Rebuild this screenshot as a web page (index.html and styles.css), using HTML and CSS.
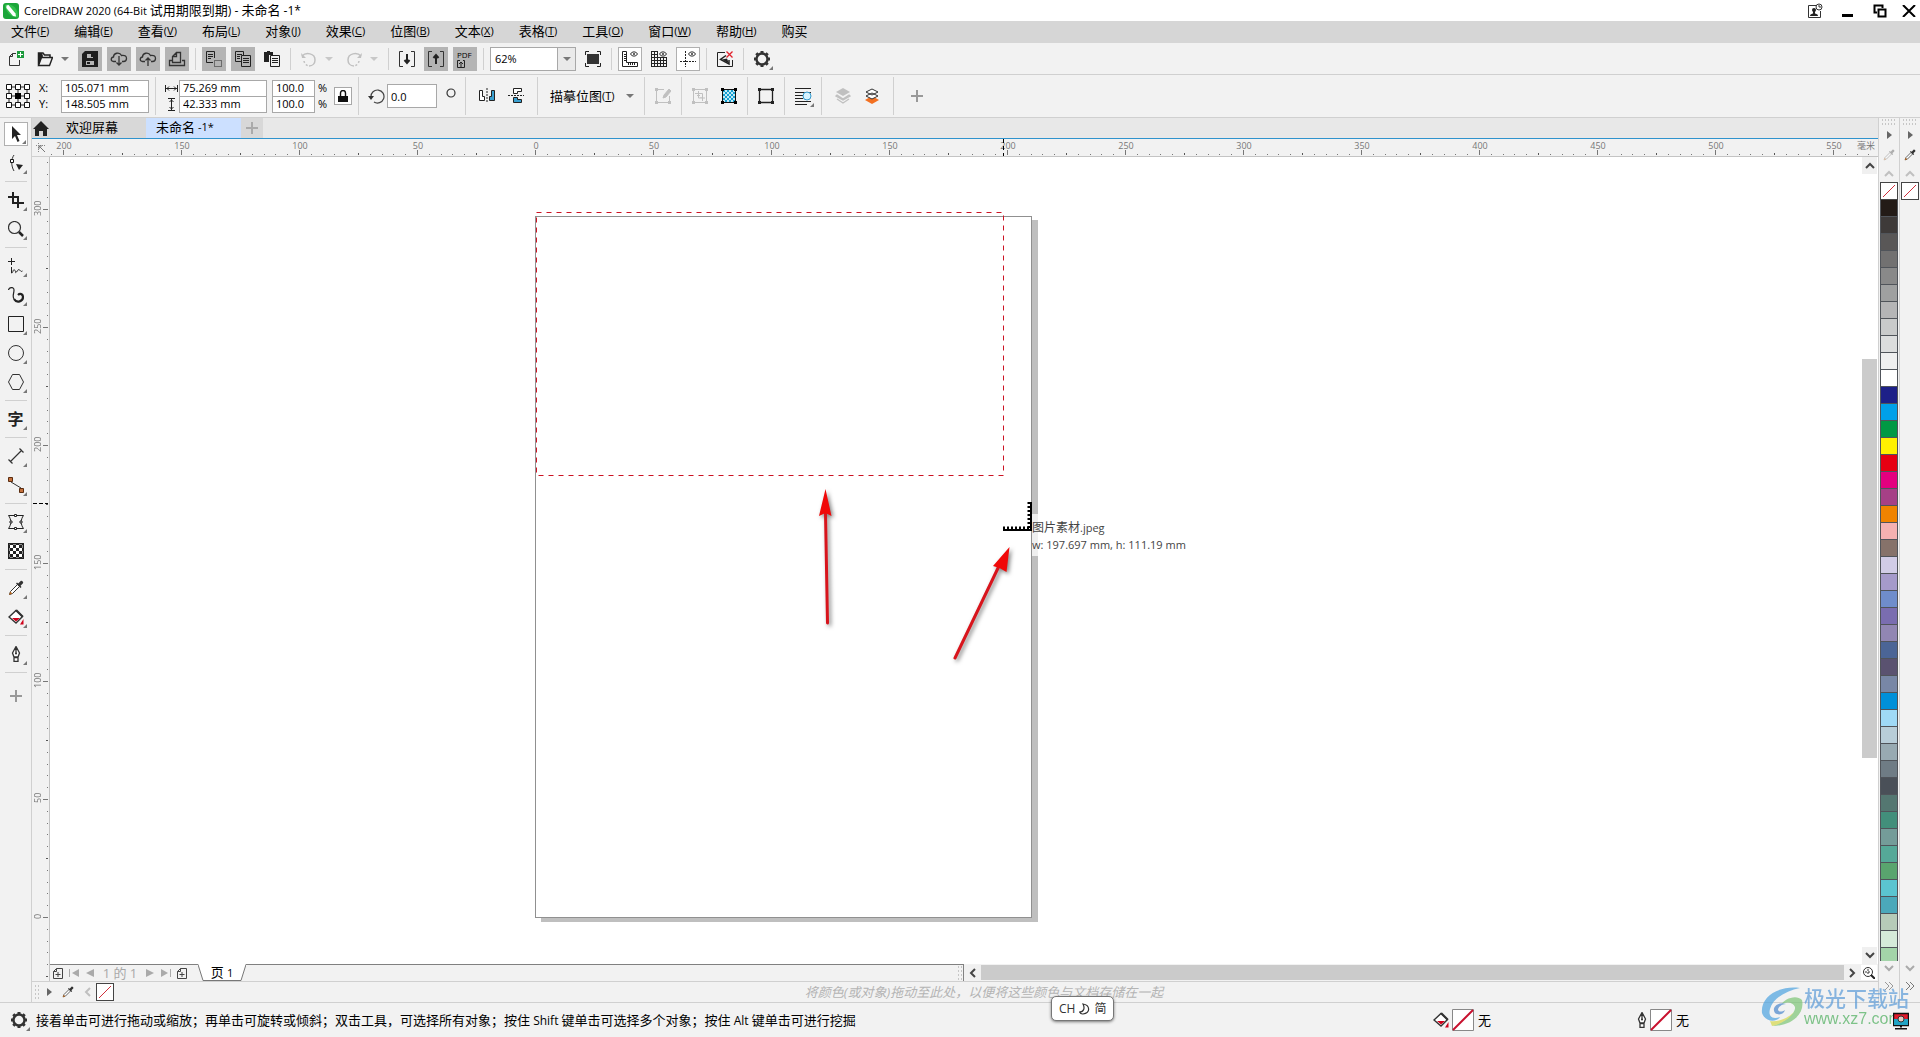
FILE: index.html
```html
<!DOCTYPE html>
<html lang="zh-CN">
<head>
<meta charset="utf-8">
<title>CorelDRAW 2020</title>
<link rel="stylesheet" href="styles.css">
</head>
<body>
<svg class="defs" width="0" height="0" aria-hidden="true">
  <symbol id="dropper" viewBox="0 0 16 16"><path d="M1.5 14.500l1-3 7-7 2 2-7 7z" fill="#fff" stroke="#333"/><path d="M1 15l1.300-3.500 2 2z" fill="#b5651d"/><path d="M8 3.500l4.500 4.500 1-1-1-1.200 2.500-2.500c1-1-1.300-3.300-2.300-2.300L10.200 3.500 9 2.500z" fill="#333"/></symbol>
  <symbol id="gear" viewBox="0 0 18 18"><circle cx="9" cy="9" r="5.500" fill="none" stroke="#333" stroke-width="2.400"/><path d="M9 1v2M9 15v2M1 9h2M15 9h2M3.300 3.300l1.500 1.500M13.200 13.200l1.500 1.500M3.300 14.700l1.500-1.500M13.200 4.800l1.500-1.500" stroke="#333" stroke-width="3"/></symbol>
  <symbol id="tri" viewBox="0 0 8 4"><path d="M0 0h8L4 4z" fill="currentColor"/></symbol>
  <symbol id="up" viewBox="0 0 10 7"><path d="M1 6l4-4 4 4" fill="none" stroke="currentColor" stroke-width="2"/></symbol>
  <symbol id="down" viewBox="0 0 10 7"><path d="M1 1l4 4 4-4" fill="none" stroke="currentColor" stroke-width="2"/></symbol>
  <symbol id="left" viewBox="0 0 7 10"><path d="M6 1L2 5l4 4" fill="none" stroke="currentColor" stroke-width="2"/></symbol>
  <symbol id="right" viewBox="0 0 7 10"><path d="M1 1l4 4-4 4" fill="none" stroke="currentColor" stroke-width="2"/></symbol>
  <symbol id="play" viewBox="0 0 5 8"><path d="M0 0l5 4-5 4z" fill="#666"/></symbol>
  <symbol id="addpage" viewBox="0 0 10 11"><path d="M3.500.5h6v10h-9v-7zM3.500.5v3h-3M5 4v5M2.500 6.500h5" fill="none" stroke="#444"/></symbol>
  <symbol id="pen" viewBox="0 0 10 16"><path d="M5 .5L1.500 7l1.500 4h4l1.500-4zM5 1v7M3 11.500h4v4H3z" fill="#fff" stroke="#333" stroke-width="1.300"/><circle cx="5" cy="7.500" r="1" fill="#333"/></symbol>
  <symbol id="bucket" viewBox="0 0 16 16"><path d="M1 8l7-6.500 6.500 6L8 14z" fill="#fff" stroke="#333" stroke-width="1.400"/><path d="M7 1.500l2-1 6.500 6.500-1.500 1.500z" fill="#333"/><path d="M4 9h8l-4 3.500zM15.500 10v5.500H12z" fill="#d0021b"/></symbol>
  <symbol id="eye" viewBox="0 0 8 6"><path d="M.5 3C2 .2 6 .2 7.500 3 6 5.800 2 5.800.5 3z" fill="none" stroke="#333"/><circle cx="4" cy="3" r="1" fill="#333"/></symbol>
</svg>

<header class="titlebar">
  <svg class="logo" width="16" height="16"><rect width="16" height="16" rx="3" fill="#1ca53a"/><path d="M2 2c6-3 14 4 13 12-5 2-13-5-13-12z" fill="#32c04c"/><path d="M3.500 2.500l2-.5 7 8.500.5 3-3-.5L3.300 5z" fill="#fff"/></svg>
  <h1 class="title"><span class="lat">CorelDRAW 2020 (64-Bit </span>试用期限到期<span class="lat wide-lat">) - </span>未命名<span class="lat wide-lat"> -1*</span></h1>
  <div class="window-buttons">
    <button aria-label="帐户"><svg width="16" height="16"><path d="M9 2.500H1.500v12h12V8" fill="none" stroke="#333"/><circle cx="7" cy="7" r="2" fill="#222"/><path d="M3 13c0-2 2-2 3-2.500V8h2v2.500c1 .5 3 .5 3 2.500z" fill="#222"/><circle cx="12" cy="4" r="3" fill="#fff" stroke="#333"/><path d="M12 2v2h2" fill="none" stroke="#333"/></svg></button>
    <button aria-label="最小化"><svg width="12" height="12"><path d="M0 9h11v3H0z"/></svg></button>
    <button aria-label="还原"><svg width="14" height="14"><path d="M4 8.500H1.500v-7h8V4M5.500 5.500h7v7h-7z" fill="none" stroke="#000" stroke-width="2"/></svg></button>
    <button aria-label="关闭"><svg width="14" height="12"><path d="M1 0l12 12M13 0L1 12" stroke="#000" stroke-width="2"/></svg></button>
  </div>
</header>

<nav class="menubar">
  <button>文件<span class="lat">(<u>F</u>)</span></button><button>编辑<span class="lat">(<u>E</u>)</span></button><button>查看<span class="lat">(<u>V</u>)</span></button><button>布局<span class="lat">(<u>L</u>)</span></button><button>对象<span class="lat">(<u>J</u>)</span></button><button>效果<span class="lat">(<u>C</u>)</span></button><button>位图<span class="lat">(<u>B</u>)</span></button><button>文本<span class="lat">(<u>X</u>)</span></button><button>表格<span class="lat">(<u>T</u>)</span></button><button>工具<span class="lat">(<u>O</u>)</span></button><button>窗口<span class="lat">(<u>W</u>)</span></button><button>帮助<span class="lat">(<u>H</u>)</span></button><button>购买</button>
</nav>

<div class="toolbar">
  <button class="tool" aria-label="新建"><svg width="18" height="18"><path d="M9 3.500H5.500l-3 3v9h10V10M5.500 3.500v3h-3" fill="none" stroke="#333"/><path d="M10 1h7v7h-7z" fill="#1c9a3c"/><path d="M13.500 2v5M11 4.500h5" stroke="#fff"/></svg></button>
  <div class="split">
    <button class="tool" aria-label="打开"><svg width="16" height="16"><path d="M1.500 14V2H6l1.500 2H13v2" fill="none" stroke="#222" stroke-width="1.500"/><path d="M1 15V2h4l1 3-3 10z" fill="#222"/><path d="M4.500 6.500h11l-3 8h-11z" fill="#f2f2f2" stroke="#222" stroke-width="1.400"/></svg></button>
    <button class="drop" aria-label="最近打开"><svg width="8" height="4"><use href="#tri"/></svg></button>
  </div>
  <button class="tool dim" aria-label="保存"><svg width="16" height="16"><path d="M3 0h13v16H0V3z" fill="#1c1c1c"/><path d="M5 3h6v4H5zM4 10h8v4H4z" fill="#b4b4b4"/><path d="M9 3h2v3H9zM5 11h3v2H5z" fill="#1c1c1c"/></svg></button>
  <button class="tool dim" aria-label="从云打开"><svg width="18" height="16"><path d="M6 10.500H3.500c-3 0-3-4 0-4.500 0-4 6-5.500 8-1.500 4-.5 5 1 5 3s-1 3-3 3H12M9 5v9M6.500 11.500L9 14l2.500-2.500" fill="none" stroke="#333" stroke-width="1.300"/></svg></button>
  <button class="tool dim" aria-label="保存到云"><svg width="18" height="16"><path d="M6 10.500H3.500c-3 0-3-4 0-4.500 0-4 6-5.500 8-1.500 4-.5 5 1 5 3s-1 3-3 3H12M9 15V7M6.500 9.500L9 7l2.500 2.500" fill="none" stroke="#333" stroke-width="1.300"/></svg></button>
  <button class="tool dim" aria-label="打印"><svg width="18" height="16"><path d="M4 9.500H1.500v5h15v-5H14M4.500 11.500v-6l4-4h4v10zM8.500 1.500v4h-4" fill="none" stroke="#333" stroke-width="1.300"/></svg></button>
  <span class="sep"></span>
  <button class="tool dim" aria-label="剪切"><svg width="16" height="16"><path d="M7 11.500H.5V.5h8V7M2 3.500h5M2 5.500h5M2 7.500h3" fill="none" stroke="#222"/><path d="M8.500 9.500h7v6h-7z" fill="none" stroke="#222" stroke-dasharray="1 1"/></svg></button>
  <button class="tool dim" aria-label="复制"><svg width="16" height="16"><path d="M6 10.500H.5V.5h8V4M2 3.500h5M2 5.500h3M2 7.500h3M6.500 4.500h9v11h-9zM8 7.500h6M8 9.500h6M8 11.500h6" fill="none" stroke="#222"/></svg></button>
  <button class="tool" aria-label="粘贴"><svg width="16" height="16"><path d="M0 1h3V0h3v1h3v3H5v7H0z" fill="#222"/><path d="M6.500 4.500h9v11h-9zM8 7.500h6M8 9.500h6M8 11.500h6" fill="none" stroke="#222"/></svg></button>
  <span class="sep"></span>
  <div class="split off">
    <button class="tool" aria-label="撤消"><svg width="16" height="16"><path d="M1 5c4-4 13-3 13 4 0 3-2 6-6 6" fill="none" stroke="currentColor" stroke-width="1.500"/><path d="M3 10a6 6 0 0 0 5 5" fill="none" stroke="currentColor" stroke-width="1.500" stroke-dasharray="2 2"/><path d="M0 2l1 5h4z" fill="currentColor"/></svg></button>
    <button class="drop" aria-label="撤消列表"><svg width="8" height="4"><use href="#tri"/></svg></button>
  </div>
  <div class="split off">
    <button class="tool" aria-label="重做"><svg width="16" height="16"><path d="M15 5C11 1 2 2 2 9c0 3 2 6 6 6" fill="none" stroke="currentColor" stroke-width="1.500"/><path d="M13 10a6 6 0 0 1-5 5" fill="none" stroke="currentColor" stroke-width="1.500" stroke-dasharray="2 2"/><path d="M16 2l-1 5h-4z" fill="currentColor"/></svg></button>
    <button class="drop" aria-label="重做列表"><svg width="8" height="4"><use href="#tri"/></svg></button>
  </div>
  <span class="sep"></span>
  <button class="tool" aria-label="导入"><svg width="16" height="16"><path d="M4 .5H.5v15H4M12 .5h3.500v15H12" fill="none" stroke="#333"/><path d="M8 3v9M5.500 9L8 12l2.500-3" fill="none" stroke="#222" stroke-width="2"/></svg></button>
  <button class="tool dim" aria-label="导出"><svg width="16" height="16"><path d="M4 .5H.5v15H4M12 .5h3.500v15H12" fill="none" stroke="#333"/><path d="M8 13V4M5.500 7L8 4l2.500 3" fill="none" stroke="#222" stroke-width="2"/></svg></button>
  <button class="tool dim pdf" aria-label="发布为 PDF"><span>PDF</span><svg width="9" height="9"><path d="M3 1.500H.5v7h7v-7H6M4 8V3M2 5l2-2 2 2" fill="none" stroke="#222"/></svg></button>
  <span class="sep"></span>
  <div class="combo"><input type="text" aria-label="缩放级别" value="62%"><button aria-label="选择缩放"><svg width="8" height="4"><use href="#tri"/></svg></button></div>
  <button class="tool" aria-label="全屏预览"><svg width="16" height="16"><path d="M2 3h12v10H2z" fill="#333"/><path d="M.5 4V.5H4M12 .5h3.500V4M15.500 12v3.500H12M4 15.500H.5V12" fill="none" stroke="#222"/></svg></button>
  <span class="sep"></span>
  <button class="tool on" aria-label="显示标尺"><svg width="16" height="16"><path d="M.5.5h4v11h11v4H.5zM2 3.500h2M2 5.500h2M2 7.500h2M2 9.500h2M6.500 12v2M8.500 12v2M10.500 12v2M12.500 12v2" fill="none" stroke="#222"/><use href="#eye" x="8" width="8" height="6"/></svg></button>
  <button class="tool" aria-label="显示网格"><svg width="16" height="16"><path d="M.5 0v16M3.500 0v16M6.500 0v16M9.500 6v10M12.500 6v10M15.500 6v10M0 .5h7M0 3.500h7M0 6.500h16M0 9.500h16M0 12.500h16M0 15.500h16" stroke="#222"/><use href="#eye" x="8" width="8" height="6"/></svg></button>
  <button class="tool on" aria-label="显示辅助线"><svg width="16" height="16"><path d="M5.500 0v16M0 10.500h16" stroke="#222" stroke-dasharray="2 1"/><use href="#eye" x="8" width="8" height="6"/></svg></button>
  <span class="sep"></span>
  <button class="tool" aria-label="关闭贴齐"><svg width="16" height="16"><path d="M8 1.500H.5v14h15V9" fill="none" stroke="#222"/><path d="M9 4.500L3.500 8.500 12 13V9" fill="none" stroke="#222" stroke-width="1.500"/><path d="M5 8.500l5-1 2 5z" fill="#222"/><path d="M9.500.5l6 6M15.500.5l-6 6" stroke="#e0202a" stroke-width="1.300"/></svg></button>
  <span class="sep"></span>
  <button class="tool fly" aria-label="选项"><svg width="18" height="18"><use href="#gear"/></svg></button>
</div>

<div class="propbar">
  <div class="group coords">
    <svg class="anchor" width="24" height="24"><path d="M3 3h18v18H3zM12 3v18M3 12h18" fill="none" stroke="#222"/><path d="M.5.5h5v5h-5zM9.500.5h5v5h-5zM18.500.5h5v5h-5zM.5 9.500h5v5h-5zM18.500 9.500h5v5h-5zM.5 18.500h5v5h-5zM9.500 18.500h5v5h-5zM18.500 18.500h5v5h-5z" fill="#fff" stroke="#111"/><path d="M9 9h6v6H9z"/></svg>
    <div class="labels"><label for="px">X:</label><label for="py">Y:</label></div>
    <div class="stack"><input id="px" type="text" value="105.071 mm"><input id="py" type="text" value="148.505 mm"></div>
  </div>
  <div class="group size">
    <div class="labels icons">
      <label for="pw" aria-label="宽度"><svg width="13" height="7"><path d="M.5 0v7M12.500 0v7M1 3.500h11M4 1.500l-2 2 2 2M9 1.500l2 2-2 2" fill="none" stroke="#222"/></svg></label>
      <label for="ph" aria-label="高度"><svg width="7" height="13"><path d="M0 .5h7M0 12.500h7M3.500 1v11M1.500 4l2-2 2 2M1.500 9l2 2 2-2" fill="none" stroke="#222"/></svg></label>
    </div>
    <div class="stack"><input id="pw" type="text" value="75.269 mm"><input id="ph" type="text" value="42.333 mm"></div>
    <div class="stack pct"><input id="sx" type="text" value="100.0"><input id="sy" type="text" value="100.0"></div>
    <div class="labels unit"><label for="sx">%</label><label for="sy">%</label></div>
    <button class="lock" aria-label="锁定比率"><svg width="10" height="12"><path d="M2.500 6V3a2 2 0 0 1 5 0v3" fill="none" stroke="#111" stroke-width="1.400"/><path d="M0 6h10v6H0z" fill="#111"/></svg></button>
  </div>
  <div class="group rotate">
    <svg width="17" height="16"><path d="M3 9a6.500 6.500 0 1 1 3 5" fill="none" stroke="#444" stroke-width="1.200"/><path d="M0 8h6l-3 4z" fill="#333"/></svg>
    <input class="angle" type="text" aria-label="旋转角度" value="0.0">
    <svg class="degree" width="10" height="10"><circle cx="5" cy="5" r="4" fill="none" stroke="#333" stroke-width="1.200"/></svg>
  </div>
  <div class="group wide">
    <button class="tool" aria-label="水平镜像"><svg width="16" height="16"><path d="M.5 2.500h3v6h2v4h-5z" fill="#fff" stroke="#222"/><path d="M15.500 2.500h-3v6h-2v4h5z" fill="#3aa0d0" stroke="#222"/><path d="M8 0v15" stroke="#222" stroke-dasharray="2 1"/></svg></button>
    <button class="tool" aria-label="垂直镜像"><svg width="16" height="16"><path d="M5.500 5.500v-5h8v3h-4v2z" fill="#fff" stroke="#222"/><path d="M5.500 9.500v5h8v-3h-4v-2z" fill="#3aa0d0" stroke="#222"/><path d="M0 7.500h16" stroke="#222" stroke-dasharray="2 1"/></svg></button>
  </div>
  <div class="group trace"><button class="textbtn">描摹位图<span class="lat">(<u>T</u>)</span><svg width="8" height="4"><use href="#tri"/></svg></button></div>
  <div class="group off"><button class="tool" aria-label="编辑位图"><svg width="16" height="16"><path d="M9 1.500H1.500v13h13V8M8 10l1-3 5-6 2 2-5 6z" fill="none" stroke="currentColor"/><path d="M0 0h3v3H0zM0 13h3v3H0zM13 13h3v3h-3zM9 7l5-6 2 2-5 6-3 1z" fill="currentColor"/></svg></button></div>
  <div class="group"><button class="tool off" aria-label="裁剪位图"><svg width="16" height="16"><path d="M1.500 1.500h13v13h-13zM6.500 3v7H13M3 5.500h7.500V13M5 7.500h3M9 9v1" fill="none" stroke="currentColor"/><path d="M0 0h3v3H0zM13 0h3v3h-3zM0 13h3v3H0zM13 13h3v3h-3z" fill="currentColor"/></svg></button>
    <button class="tool" aria-label="重新取样"><svg width="16" height="16"><defs><pattern id="chk" width="4" height="4" patternUnits="userSpaceOnUse"><rect width="4" height="4" fill="#bfeaf8"/><path d="M0 0h2v2H0zM2 2h2v2H2z" fill="#159fd0"/></pattern></defs><path d="M1.500 1.500h13v13h-13z" fill="url(#chk)" stroke="#111"/><path d="M0 0h3v3H0zM13 0h3v3h-3zM0 13h3v3H0zM13 13h3v3h-3z"/></svg></button></div>
  <div class="group"><button class="tool" aria-label="位图边框"><svg width="16" height="16"><path d="M1.500 1.500h13v13h-13z" fill="none" stroke="#222" stroke-width="1.300"/><path d="M0 0h3v3H0zM13 0h3v3h-3zM0 13h3v3H0zM13 13h3v3h-3z" fill="#222"/></svg></button></div>
  <div class="group"><button class="tool fly" aria-label="文本换行"><svg width="18" height="18"><path d="M1 1.500h16M1 5.500h16M1 8.500h8M1 11.500h8M1 14.500h16M1 17.500h12" stroke="#222"/><circle cx="13" cy="9" r="4" fill="#d6f3ff" stroke="#3399cc"/></svg></button></div>
  <div class="group wide"><button class="tool off" aria-label="到图层前面"><svg width="16" height="16"><path d="M8 0l7 4-7 4-7-4z" fill="currentColor"/><path d="M2 7l6 4 6-4 1 1-7 4-7-4zM2 11l6 4 6-4" fill="none" stroke="currentColor" stroke-width="1.300"/></svg></button>
    <button class="tool" aria-label="到图层后面"><svg width="16" height="16"><path d="M1 12l7-4 7 4-7 4z" fill="#f37021"/><path d="M2 8l6-3 6 3-6 3zM2 4l6-3 6 3-6 3z" fill="#fff" stroke="#333"/></svg></button></div>
  <button class="tool plus" aria-label="自定义"><svg width="12" height="12"><path d="M6 0v12M0 6h12" stroke="#999" stroke-width="2"/></svg></button>
</div>

<main class="workspace">
  <aside class="toolbox">
    <button class="tool on fly" aria-label="选择"><svg width="16" height="16"><path d="M4 0v13l3-3 2.500 6 2-1L9 9h4z" fill="#222"/></svg></button>
    <button class="tool fly" aria-label="形状"><svg width="16" height="16"><path d="M6 0C3 4 3 11 6 16" fill="none" stroke="#333"/><path d="M2.500 4.500h3v3h-3z" fill="#fff" stroke="#111"/><path d="M8 9l7 1-4 5z" fill="#222"/></svg></button>
    <span class="sep"></span>
    <button class="tool fly" aria-label="裁剪"><svg width="16" height="16"><path d="M0 5h10v11M16 11H5V0" fill="none" stroke="#222" stroke-width="2"/></svg></button>
    <button class="tool fly" aria-label="缩放"><svg width="16" height="16"><circle cx="6.500" cy="6.500" r="6" fill="none" stroke="#333" stroke-width="1.200"/><path d="M11 11l4 4" stroke="#222" stroke-width="2.500"/></svg></button>
    <span class="sep"></span>
    <button class="tool fly" aria-label="手绘"><svg width="16" height="16"><path d="M3.500 0v7M0 3.500h7M3.500 9v6c2 0 1-4 3-3s0 4 2 2 1-3 3-2 1 2 3 1" fill="none" stroke="#222"/></svg></button>
    <button class="tool fly" aria-label="艺术笔"><svg width="16" height="16"><path d="M.5 3C1 0 6-.5 6 3c0 4-2 6 0 9" fill="none" stroke="#222" stroke-width="1.200"/><path d="M6 12c3 5 9 2 9-2 0-3-3-4-5-2" fill="none" stroke="#222" stroke-width="2.200"/></svg></button>
    <button class="tool fly" aria-label="矩形"><svg width="16" height="16"><path d="M.5.5h15v15H.5z" fill="none" stroke="#222"/></svg></button>
    <button class="tool fly" aria-label="椭圆形"><svg width="16" height="16"><circle cx="8" cy="8" r="7.500" fill="none" stroke="#333"/></svg></button>
    <button class="tool fly" aria-label="多边形"><svg width="16" height="16"><path d="M4.500.5h7L15.500 8l-4 7.500h-7L.5 8z" fill="none" stroke="#333"/></svg></button>
    <span class="sep"></span>
    <button class="tool fly glyph">字</button>
    <span class="sep"></span>
    <button class="tool fly" aria-label="平行度量"><svg width="16" height="16"><path d="M2 14L14 2M.5 11.500l4 4M11.500.5l4 4" stroke="#333" stroke-width="1.200"/></svg></button>
    <button class="tool fly" aria-label="连接器"><svg width="16" height="16"><path d="M3 5l10 6" stroke="#333"/><path d="M.5.5h4v4h-4zM11.500 11.500h4v4h-4z" fill="#c4703c" stroke="#5a2d10"/></svg></button>
    <span class="sep"></span>
    <button class="tool fly" aria-label="变形"><svg width="16" height="16"><path d="M.5 1.500h15c-3 4-3 9 0 13H.5c3-4 3-9 0-13z" fill="none" stroke="#222"/><path d="M6.500.5h2v2h-2zM6.500 13.500h2v2h-2zM2 7h2v2H2zM12 7h2v2h-2z" fill="#fff" stroke="#222"/></svg></button>
    <button class="tool" aria-label="透明度"><svg width="16" height="16"><defs><pattern id="chess" x="2" y="2" width="6" height="6" patternUnits="userSpaceOnUse"><rect width="6" height="6" fill="#222"/><path d="M0 0h3v3H0zM3 3h3v3H3z" fill="#fff"/></pattern></defs><path d="M.5.5h15v15H.5z" fill="url(#chess)" stroke="#222" stroke-width="2"/></svg></button>
    <span class="sep"></span>
    <button class="tool fly" aria-label="颜色滴管"><svg width="16" height="16"><use href="#dropper"/></svg></button>
    <button class="tool fly" aria-label="交互式填充"><svg width="16" height="16"><use href="#bucket"/></svg></button>
    <span class="sep"></span>
    <button class="tool fly" aria-label="轮廓笔"><svg width="10" height="16"><use href="#pen"/></svg></button>
    <span class="sep"></span>
    <button class="tool plus" aria-label="自定义工具箱"><svg width="12" height="12"><path d="M6 0v12M0 6h12" stroke="#999" stroke-width="2"/></svg></button>
  </aside>

  <section class="document">
    <div class="tabs">
      <button class="tab home" aria-label="主页"><svg width="16" height="15"><path d="M8 0l8 8h-2v7h-4v-5H6v5H2V8H0z" fill="#222"/></svg></button>
      <button class="tab welcome">欢迎屏幕</button>
      <button class="tab active">未命名<span class="lat"> -1*</span></button>
      <button class="tab add" aria-label="新建文档"><svg width="12" height="12"><path d="M6 0v12M0 6h12" stroke="#aaa" stroke-width="2"/></svg></button>
    </div>
    <div class="sheet">
      <div class="corner"><svg width="10" height="10"><path d="M2.500 0v10M0 2.500h10" stroke="#888" stroke-dasharray="1 1"/><path d="M3 3l6 6M3 6V3h3" fill="none" stroke="#777"/></svg></div>
      <div class="ruler-h">
        <svg class="ticks" width="100%" height="17"><defs><pattern id="th" x="13" width="118" height="17" patternUnits="userSpaceOnUse"><path d="M.5 11v5" stroke="#777"/><path d="M59.500 14v2" stroke="#555"/><path d="M12.500 15v1M24.500 15v1M35.500 15v1M47.500 15v1M71.500 15v1M83.500 15v1M94.500 15v1M106.500 15v1" stroke="#777"/></pattern></defs><rect width="100%" height="17" fill="url(#th)"/><path d="M953.500 0v17" stroke="#000" stroke-dasharray="4 3"/></svg>
        <div class="marks"><span>200</span><span>150</span><span>100</span><span>50</span><span>0</span><span>50</span><span>100</span><span>150</span><span>200</span><span>250</span><span>300</span><span>350</span><span>400</span><span>450</span><span>500</span><span>550</span></div>
        <span class="unit-name">毫米</span>
      </div>
      <div class="ruler-v">
        <svg class="ticks" width="17" height="100%"><defs><pattern id="tv" y="52" width="17" height="118" patternUnits="userSpaceOnUse"><path d="M11 .5h5" stroke="#777"/><path d="M14 59.500h2" stroke="#555"/><path d="M15 12.500h1M15 24.500h1M15 35.500h1M15 47.500h1M15 71.500h1M15 83.500h1M15 94.500h1M15 106.500h1" stroke="#777"/></pattern></defs><rect width="17" height="100%" fill="url(#tv)"/><path d="M1 346.500h15" stroke="#000" stroke-dasharray="4 2"/></svg>
        <div class="marks"><span>300</span><span>250</span><span>200</span><span>150</span><span>100</span><span>50</span><span>0</span></div>
      </div>
      <div class="canvas">
        <div class="page"></div>
        <svg class="overlay" width="1000" height="640">
          <path d="M486.500 55.500h467v263h-467z" fill="none" stroke="#cc1424" stroke-dasharray="5 5"/>
          <path d="M953 373h28v-28" fill="none" stroke="#000" stroke-width="2"/>
          <path d="M953 371h27" stroke="#000" stroke-width="3" stroke-dasharray="2 2"/><path d="M979 371v-26" stroke="#000" stroke-width="3" stroke-dasharray="2 2"/>
          <g class="arrow"><path d="M775.500 356l2 110" stroke="#d8141c" stroke-width="3" stroke-linecap="round"/><path d="M775.500 332l6 27-6-3-6.500 3z" fill="#f00808"/><path d="M905 501l44-92" stroke="#d8141c" stroke-width="3" stroke-linecap="round"/><path d="M959.500 390l-3 25-7-4-6.500-2z" fill="#f00808"/></g>
        </svg>
        <div class="hint">图片素材<span class="lat">.jpeg</span><br><span class="lat">w: 197.697 mm, h: 111.19 mm</span></div>
      </div>
      <div class="scroll-v">
        <button aria-label="向上滚动"><svg width="10" height="7"><use href="#up"/></svg></button>
        <div class="track"><span class="before"></span><span class="thumb"></span><span class="after"></span></div>
        <button aria-label="向下滚动"><svg width="10" height="7"><use href="#down"/></svg></button>
      </div>
      <div class="bottom">
        <div class="pagebar">
          <button aria-label="在前面添加页"><svg width="10" height="11"><use href="#addpage"/></svg></button>
          <button aria-label="第一页"><svg width="10" height="8"><path d="M.5 0v8" stroke="#aaa"/><path d="M10 0v8L3 4z" fill="#aaa"/></svg></button>
          <button aria-label="上一页"><svg width="10" height="8"><path d="M9 0v8L1 4z" fill="#aaa"/></svg></button>
          <span class="count">1 的 1</span>
          <button aria-label="下一页"><svg width="10" height="8"><path d="M1 0v8l8-4z" fill="#aaa"/></svg></button>
          <button aria-label="最后一页"><svg width="10" height="8"><path d="M9.500 0v8" stroke="#aaa"/><path d="M0 0v8l7-4z" fill="#aaa"/></svg></button>
          <button class="last" aria-label="在后面添加页"><svg width="10" height="11"><use href="#addpage"/></svg></button>
          <button class="page-tab"><svg width="48" height="17"><path d="M0 0h48l-5 16H5z" fill="#fff"/><path d="M0 .5l5 16h38l5-16" fill="none" stroke="#777"/></svg><span>页 <span class="lat">1</span></span></button>
          <span class="dots"></span>
        </div>
        <div class="scroll-h">
          <button aria-label="向左滚动"><svg width="7" height="10"><use href="#left"/></svg></button>
          <span class="thumb"></span>
          <button aria-label="向右滚动"><svg width="7" height="10"><use href="#right"/></svg></button>
          <button class="nav" aria-label="导航器"><svg width="12" height="12"><circle cx="5" cy="5" r="4.500" fill="none" stroke="#333"/><path d="M5 2v6M2 5h6" stroke="#333" stroke-dasharray="2 1"/><path d="M8 8l4 4" stroke="#222" stroke-width="2"/></svg></button>
        </div>
      </div>
    </div>
    <div class="doc-palette">
      <span class="dots"></span>
      <button aria-label="菜单"><svg width="5" height="8"><use href="#play"/></svg></button>
      <button class="pick" aria-label="滴管"><svg width="12" height="12"><use href="#dropper"/></svg></button>
      <button class="off" aria-label="向左"><svg width="7" height="10"><use href="#left"/></svg></button>
      <button class="nofill" aria-label="无填充"><svg width="16" height="16"><path d="M2 14L14 2" stroke="#d0303c"/></svg></button>
      <p class="drag-note">将颜色(或对象)拖动至此处，以便将这些颜色与文档存储在一起</p>
    </div>
  </section>

  <aside class="palette">
    <span class="dots"></span>
    <button class="p-menu" aria-label="调色板菜单"><svg width="5" height="8"><use href="#play"/></svg></button>
    <button class="p-drop faded" aria-label="滴管"><svg width="12" height="12"><use href="#dropper"/></svg></button>
    <button class="p-up off" aria-label="向上"><svg width="10" height="7"><use href="#up"/></svg></button>
    <div class="swatches">
      <button class="nofill" aria-label="无"><svg width="16" height="16"><path d="M2 14L14 2" stroke="#d0303c"/></svg></button>
      <i style="background:#231b17"></i><i style="background:#3e3a39"></i><i style="background:#595757"></i><i style="background:#727171"></i><i style="background:#898989"></i><i style="background:#9fa0a0"></i><i style="background:#b5b5b6"></i><i style="background:#c9caca"></i><i style="background:#dcdddd"></i><i style="background:#efefef"></i><i style="background:#ffffff"></i><i style="background:#1d2088"></i><i style="background:#00a0e9"></i><i style="background:#009944"></i><i style="background:#fff100"></i><i style="background:#e60012"></i><i style="background:#e4007f"></i><i style="background:#a64086"></i><i style="background:#f08300"></i><i style="background:#f4b1b1"></i><i style="background:#86726a"></i><i style="background:#d1cce6"></i><i style="background:#a59aca"></i><i style="background:#6f8dcb"></i><i style="background:#7a6db0"></i><i style="background:#9186b3"></i><i style="background:#4b6596"></i><i style="background:#5a5270"></i><i style="background:#7887a6"></i><i style="background:#0090d9"></i><i style="background:#9fd9f6"></i><i style="background:#b8cdd8"></i><i style="background:#98aab2"></i><i style="background:#6f7c85"></i><i style="background:#4a5058"></i><i style="background:#547771"></i><i style="background:#428f7b"></i><i style="background:#749c99"></i><i style="background:#55a998"></i><i style="background:#59a56e"></i><i style="background:#5bc4d0"></i><i style="background:#4ba8ba"></i><i style="background:#b6cbb8"></i><i style="background:#d5ead9"></i><i style="background:#a3d4a9"></i>
    </div>
    <button class="p-down" aria-label="向下"><svg width="10" height="7"><use href="#down"/></svg></button>
    <button class="p-more" aria-label="展开"><svg width="10" height="8"><path d="M1 0l4 4-4 4M5 0l4 4-4 4" fill="none" stroke="#999"/></svg></button>
  </aside>
  <aside class="palette">
    <span class="dots"></span>
    <button class="p-menu" aria-label="调色板菜单"><svg width="5" height="8"><use href="#play"/></svg></button>
    <button class="p-drop" aria-label="滴管"><svg width="12" height="12"><use href="#dropper"/></svg></button>
    <button class="p-up off" aria-label="向上"><svg width="10" height="7"><use href="#up"/></svg></button>
    <div class="swatches"><button class="nofill" aria-label="无"><svg width="16" height="16"><path d="M2 14L14 2" stroke="#d0303c"/></svg></button></div>
    <button class="p-down off" aria-label="向下"><svg width="10" height="7"><use href="#down"/></svg></button>
    <button class="p-more" aria-label="展开"><svg width="10" height="8"><path d="M1 0l4 4-4 4M5 0l4 4-4 4" fill="none" stroke="#777"/></svg></button>
  </aside>
</main>

<footer class="status">
  <button class="tool fly" aria-label="状态栏选项"><svg width="18" height="18"><use href="#gear"/></svg></button>
  <p class="tips">接着单击可进行拖动或缩放；再单击可旋转或倾斜；双击工具，可选择所有对象；按住<span class="lat"> Shift </span>键单击可选择多个对象；按住<span class="lat"> Alt </span>键单击可进行挖掘</p>
  <div class="state fill"><svg width="16" height="16"><use href="#bucket"/></svg><svg class="none" width="22" height="22"><path d="M.5.5h21v21H.5z" fill="#fff" stroke="#888"/><path d="M1 21L21 1" stroke="#c8102e" stroke-width="2"/></svg>无</div>
  <div class="state outline"><svg width="10" height="16"><use href="#pen"/></svg><svg class="none" width="22" height="22"><path d="M.5.5h21v21H.5z" fill="#fff" stroke="#888"/><path d="M1 21L21 1" stroke="#c8102e" stroke-width="2"/></svg>无</div>
</footer>

<div class="watermark">
  <svg width="44" height="42"><path d="M40 2C20-1 0 10 2 27c3 9 14 10 18 4-8 3-12-1-10-8C13 12 26 5 40 2z" fill="#4da3e0"/><path d="M42 14c3 12-8 26-30 26 12-4 24-12 23-19-2-5-9-6-14-2 3-6 15-11 21-5z" fill="#7cc576"/><path d="M26 18c-8-3-15 4-11 9 4 3 9 1 10-3-3 2-6 2-7 0 0-3 4-6 8-6z" fill="#4a86cc"/><path d="M12 40c10-2 18-8 22-14-8 8-18 10-24 9z" fill="#d6d84a"/></svg>
  <div><strong>极光下载站</strong><span>www.xz7.com</span></div>
</div>
<svg class="proof" width="16" height="18"><path d="M.5 1.500h15v12H.5z" fill="#e21b2c" stroke="#111" stroke-width="1.500"/><path d="M1 7h14v6H1z" fill="#1fa3c4"/><circle cx="8" cy="7" r="3" fill="#e9c9c0" stroke="#333"/><path d="M7 13.500h2v2H7zM2 16h12v1.500H2z" fill="#111"/></svg>
<div class="ime">CH<svg width="11" height="12"><path d="M4 1c7 1 8 9 0 10-2 .2-3-1-3.500-2C5 9 6 5 4 1z" fill="none" stroke="#333" stroke-width="1.200"/></svg>简</div>
</body>
</html>
```
FILE: styles.css
```css
* { box-sizing: border-box; }

body {
  margin: 0;
  height: 100vh;
  display: flex;
  flex-direction: column;
  position: relative;
  overflow: hidden;
  background: #f2f2f2;
  color: #000;
  font: 13px/16px "Open Sans", "Noto Sans CJK SC", sans-serif;
}

button, input {
  font: inherit;
  color: inherit;
  margin: 0;
  padding: 0;
  border: 0;
  background: none;
  border-radius: 0;
}

button {
  display: flex;
  align-items: center;
  justify-content: center;
  flex: none;
  white-space: nowrap;
}

svg { display: block; flex: none; }
p { margin: 0; }
.defs { position: absolute; }
.lat { font-size: 11px; white-space: pre; }
.wide-lat, .tips .lat { font-size: 12px; }
.off { color: #c0c0c0; }
.faded { opacity: .35; }

.titlebar { display: flex; align-items: center; height: 21px; padding-left: 3px; background: #fff; flex: none; }
.title { margin: 0 auto 0 5px; font-size: 13px; font-weight: 400; line-height: 20px; white-space: nowrap; }
.window-buttons { display: flex; gap: 19px; padding-right: 4px; }
.window-buttons button:last-child { margin-left: -4px; }

.menubar { display: flex; gap: 1px; height: 22px; padding-bottom: 2px; background: #d6d6d6; flex: none; }
.menubar button { padding: 0 12px; }
.menubar button:first-child { padding-left: 11px; }

.toolbar { display: flex; align-items: center; gap: 5px; height: 32px; padding: 0 4px; border-bottom: 1px solid #d0d0d0; flex: none; }
.tool { position: relative; width: 24px; height: 24px; }
.dim { background: #b4b4b4; }
.on { background: #fff; border: 1px solid #b0b0b0; }
.sep { width: 1px; height: 22px; margin: 0 1px; background: #d0d0d0; flex: none; }
.split { display: flex; }
.drop { width: 16px; height: 24px; color: #777; }
.off .drop { color: #c8c8c8; }
.fly::after { content: ""; position: absolute; right: 1px; bottom: 1px; border: 2px solid; border-color: transparent #777 #777 transparent; }
.pdf { flex-direction: column; align-items: flex-start; padding-left: 4px; }
.pdf span { font-size: 8px; line-height: 9px; }
.combo { display: flex; width: 86px; height: 24px; border: 1px solid #a8a8a8; background: #fff; }
.combo input { width: 66px; padding-left: 4px; font-size: 11px; }
.combo button { flex: 1; border-left: 1px solid #a8a8a8; background: #eaeaea; color: #777; }

.propbar { display: flex; height: 43px; border-bottom: 1px solid #d0d0d0; flex: none; font-size: 11px; }
.group { display: flex; align-items: center; gap: 5px; padding: 0 6px; border-right: 1px solid #d0d0d0; margin: 2px 0; }
.wide { padding: 0 9px; }
.coords { gap: 0; }
.anchor { margin-right: 9px; }
.labels { display: grid; grid-template-rows: 16px 16px; align-items: center; width: 22px; }
.labels label { line-height: 16px; }
.labels.icons { width: 15px; justify-items: center; }
.labels.unit { width: 13px; padding-left: 3px; }
.stack { display: flex; flex-direction: column; width: 88px; border: 1px solid #a8a8a8; background: #fff; }
.stack input { width: 100%; height: 15px; padding-left: 3px; font-size: 11px; }
.stack input + input { height: 16px; border-top: 1px solid #a8a8a8; }
.size { gap: 0; padding-left: 8px; }
.pct { width: 43px; margin-left: 5px; }
.lock { width: 18px; height: 18px; margin-left: 6px; border: 1px solid #a8a8a8; background: #fff; }
.rotate { gap: 2px; padding: 0 9px; }
.angle { width: 50px; height: 24px; padding-left: 3px; border: 1px solid #a8a8a8; background: #fff; font-size: 11px; }
.degree { margin: 0 0 6px 7px; }
.trace { padding: 0 10px 0 12px; font-size: 13px; }
.textbtn svg { margin-left: 11px; color: #777; }
.plus { align-self: center; }
.propbar .plus { margin-left: 11px; }

.workspace { flex: 1; min-height: 0; display: grid; grid-template-columns: 32px minmax(0, 1fr) 21px 21px; grid-template-rows: minmax(0, 1fr); }
.toolbox { display: flex; flex-direction: column; align-items: center; gap: 5px; padding-top: 4px; border-right: 1px solid #d0d0d0; }
.toolbox .sep { width: 22px; height: 1px; margin: 1px 0; }
.toolbox .plus { margin-top: 5px; }
.glyph { font-size: 16px; font-weight: 700; color: #222; }

.document { display: flex; flex-direction: column; min-width: 0; }
.tabs { display: flex; height: 21px; background: #e8e8e8; border-bottom: 1px solid #2f93cd; flex: none; }
.tab { padding-bottom: 2px; background: #d8d8d8; }
.home { width: 18px; padding-bottom: 0; }
.welcome { width: 96px; padding-left: 13px; padding-right: 25px; }
.active { width: 95px; padding-right: 17px; background: #cce0ff; }
.add { width: 22px; padding-bottom: 0; }

.sheet { flex: 1; min-height: 0; display: grid; grid-template-columns: 18px minmax(0, 1fr) 16px; grid-template-rows: 18px minmax(0, 1fr) 17px; }
.corner { display: grid; place-items: center; border-bottom: 1px solid #d0d0d0; }
.ruler-h { grid-column: 2 / 4; position: relative; display: flex; border-bottom: 1px solid #c4c4c4; color: #777; font-size: 9px; line-height: 14px; }
.ruler-v { grid-row: 2 / 4; position: relative; border-right: 1px solid #c4c4c4; overflow: hidden; color: #777; font-size: 9px; line-height: 12px; }
.ticks { position: absolute; inset: 0; }
.marks { display: flex; flex: 1; overflow: hidden; }
.marks span { flex: none; text-align: center; }
.ruler-h .marks span { width: 118px; }
.ruler-h .marks span:first-child { margin-left: -45px; }
.ruler-v .marks { flex-direction: column; }
.ruler-v .marks span { height: 118px; width: 13px; writing-mode: vertical-rl; transform: rotate(180deg); }
.ruler-v .marks span:first-child { margin-top: -8px; }
.unit-name { padding-right: 3px; }

.canvas { position: relative; background: #fff; overflow: hidden; }
.page { position: absolute; left: 485px; top: 59px; width: 497px; height: 702px; border: 1px solid #909090; background: #fff; box-shadow: 6px 4px 0 #bfbfbf; }
.overlay { position: absolute; left: 0; top: 0; }
.arrow { filter: drop-shadow(2px 2px 2px rgba(0, 0, 0, .5)); }
.hint { position: absolute; left: 982px; top: 357px; padding: 5px 0 3px; background: rgba(255, 255, 255, .75); color: #444; font-size: 12px; line-height: 17px; white-space: nowrap; }

.scroll-v { display: flex; flex-direction: column; padding-right: 1px; background: #fff; }
.scroll-v button { height: 17px; background: #f0f0f0; color: #444; }
.track { flex: 1; display: flex; flex-direction: column; }
.before { flex: 185; }
.after { flex: 189; }
.track .thumb { flex: 399; }
.thumb { background: #cbcbcb; }

.bottom { grid-column: 2 / 4; display: flex; }
.pagebar { width: 50%; display: flex; align-items: center; border: solid #808080; border-width: 1px 1px 0 0; }
.pagebar button { width: 16px; height: 16px; }
.count { width: 44px; color: #a8a8a8; text-align: center; white-space: pre; }
.pagebar .last { margin-right: 8px; }
.pagebar .page-tab { position: relative; width: 48px; height: 17px; margin-top: -1px; }
.page-tab svg { position: absolute; inset: 0; }
.page-tab > span { position: relative; }
.dots { width: 6px; height: 16px; background: radial-gradient(circle, #999 1px, transparent 1px) 0 0 / 3px 4px; flex: none; }
.pagebar .dots { margin-left: auto; opacity: .5; }
.scroll-h { flex: 1; display: flex; padding: 1px 1px 1px 0; }
.scroll-h button { width: 17px; color: #444; background: #f0f0f0; }
.scroll-h .thumb { flex: 1; }
.scroll-h .nav { background: #fff; width: 16px; }

.doc-palette { display: flex; align-items: center; height: 21px; padding-left: 2px; border-top: 1px solid #d0d0d0; flex: none; }
.doc-palette .dots { opacity: .5; }
.doc-palette button { width: 18px; height: 18px; }
.doc-palette .pick { width: 20px; }
.nofill { width: 18px; height: 18px; border: 1px solid #444; background: #fff; }
.drag-note { flex: 1; padding-right: 24px; text-align: center; color: #b4b4b4; font-style: italic; }

.palette { display: flex; flex-direction: column; align-items: center; border-left: 1px solid #d0d0d0; padding-bottom: 6px; min-height: 0; }
.palette .dots { width: 16px; height: 8px; opacity: .5; }
.p-menu { height: 18px; }
.p-drop { height: 21px; }
.p-up { height: 17px; }
.p-down { height: 15px; color: #aaa; }
.p-more { height: 20px; }
.swatches { flex: 1; min-height: 0; overflow: hidden; display: flex; flex-direction: column; width: 18px; }
.swatches i { flex: none; height: 17px; border: solid #50545a; border-width: 0 1px 1px; }

.status { display: flex; align-items: center; height: 35px; padding-left: 7px; border-top: 1px solid #d0d0d0; flex: none; }
.status .tool { margin-right: 5px; }
.tips { white-space: nowrap; margin-right: auto; }
.state { display: flex; align-items: center; width: 204px; }
.state .none { margin: 0 4px 0 3px; }
.outline { width: 283px; }

.watermark { position: absolute; right: 11px; bottom: 9px; display: flex; opacity: .7; }
.watermark div { display: flex; flex-direction: column; }
.watermark strong { font-size: 21px; line-height: 24px; font-weight: 500; color: #5a9bd8; }
.watermark span { font: 16px/18px "Liberation Sans", sans-serif; color: #4cae5c; }
.proof { position: absolute; right: 11px; bottom: 7px; }
.ime { position: absolute; left: 1051px; top: 996px; display: flex; align-items: center; gap: 4px; height: 25px; padding: 0 7px; border: 1px solid #777; border-radius: 5px; background: #fff; box-shadow: 0 1px 3px rgba(0, 0, 0, .5); color: #333; font-size: 12px; }
```
